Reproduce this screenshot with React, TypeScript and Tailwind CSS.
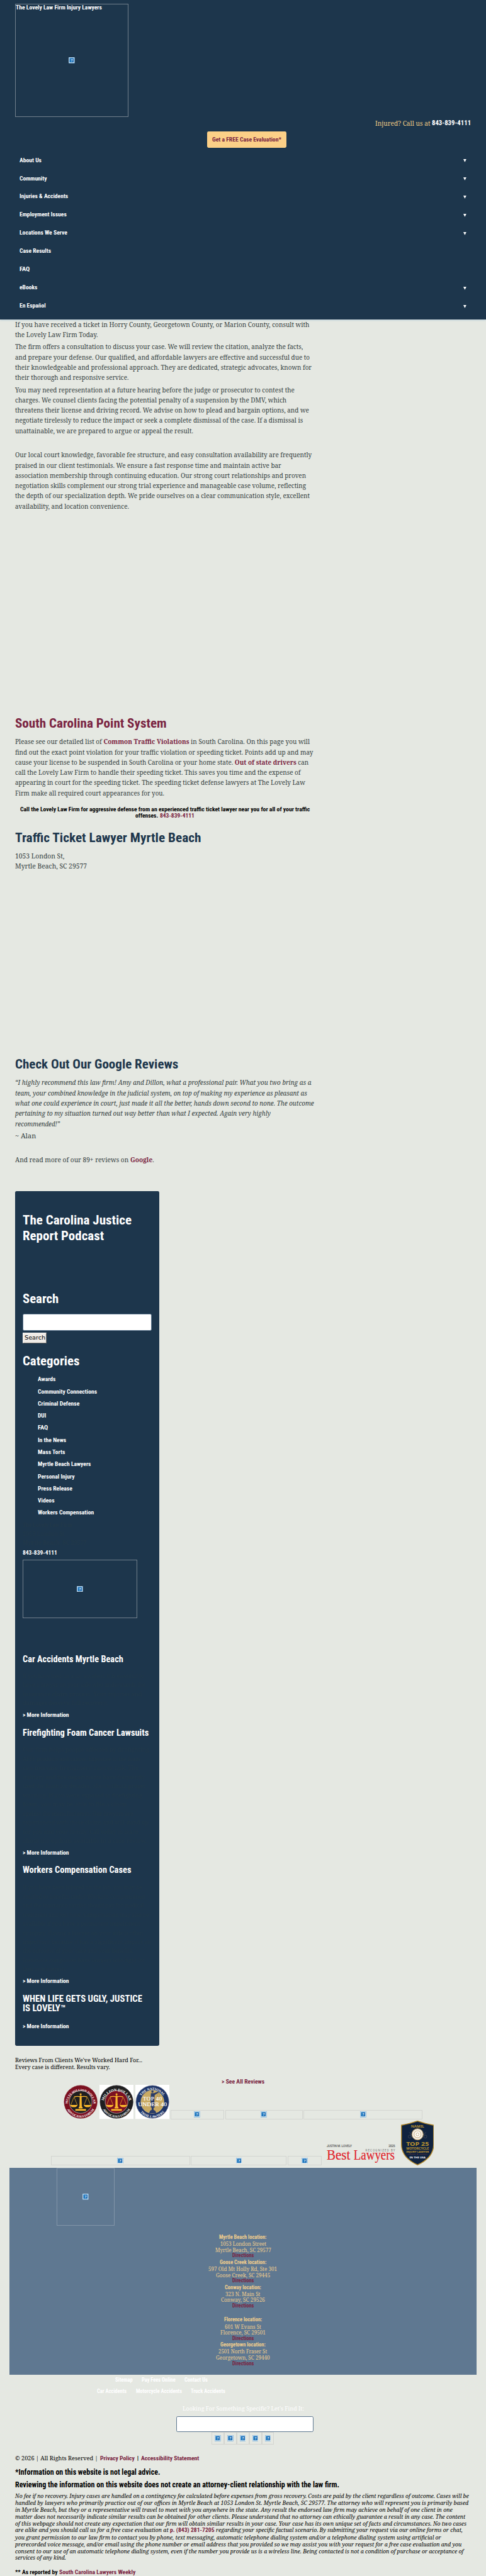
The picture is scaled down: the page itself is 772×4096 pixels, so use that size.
import { useLayoutEffect, useRef, type ReactNode } from "react";

const PAGE_WIDTH = 1280;

/** One line of text, condensed or widened so that it spans `w` pixels. */
function T({ w, className = "", children }: { w: number; className?: string; children: ReactNode }) {
  const ref = useRef<HTMLSpanElement>(null);
  useLayoutEffect(() => {
    const el = ref.current;
    const page = el?.closest("[data-page]");
    if (!el || !page) return;
    el.style.width = "";
    el.style.transform = "";
    const scale = page.getBoundingClientRect().width / PAGE_WIDTH;
    const natural = el.getBoundingClientRect().width / scale;
    el.style.width = `${w}px`;
    el.style.transform = `scaleX(${w / natural})`;
  }, [w]);
  return (
    <span ref={ref} className={`block w-fit origin-left whitespace-pre ${className}`}>
      {children}
    </span>
  );
}

function Missing() {
  return (
    <svg viewBox="0 0 16 16" className="size-4 shrink-0">
      <rect x="0" y="0" width="16" height="16" fill="#5c9fd2" />
      <rect x="0.8" y="0.8" width="14.4" height="14.4" fill="#fff" />
      <rect x="2.2" y="2.2" width="11.6" height="11.6" fill="#1f74bb" />
      <text x="8" y="12" textAnchor="middle" fontSize="11" fill="#fff" fontFamily="Liberation Serif, serif" fontWeight="bold">?</text>
    </svg>
  );
}

function Frame({ className }: { className: string }) {
  return (
    <div className={`flex shrink-0 items-center justify-center border-2 ${className}`}>
      <Missing />
    </div>
  );
}

const nav: [string, number, boolean][] = [
  ["About Us", 58, true],
  ["Community", 72, true],
  ["Injuries & Accidents", 128, true],
  ["Employment Issues", 124, true],
  ["Locations We Serve", 126, true],
  ["Case Results", 83, false],
  ["FAQ", 27, false],
  ["eBooks", 47, true],
  ["En Español", 69, true],
];

const intro: { cls: string; lines: [string, number][] }[] = [
  {
    cls: "",
    lines: [
      ["If you have received a ticket in Horry County, Georgetown County, or Marion County, consult with", 775],
      ["the Lovely Law Firm Today.", 218],
    ],
  },
  {
    cls: "mt-[5px]",
    lines: [
      ["The firm offers a consultation to discuss your case. We will review the citation, analyze the facts,", 758],
      ["and prepare your defense. Our qualified, and affordable lawyers are effective and successful due to", 776],
      ["their knowledgeable and professional approach. They are dedicated, strategic advocates, known for", 781],
      ["their thorough and responsive service.", 299],
    ],
  },
  {
    cls: "mt-[5px]",
    lines: [
      ["You may need representation at a future hearing before the judge or prosecutor to contest the", 736],
      ["charges. We counsel clients facing the potential penalty of a suspension by the DMV, which", 715],
      ["threatens their license and driving record. We advise on how to plead and bargain options, and we", 774],
      ["negotiate tirelessly to reduce the impact or seek a complete dismissal of the case. If a dismissal is", 758],
      ["unattainable, we are prepared to argue or appeal the result.", 469],
    ],
  },
  {
    cls: "mt-[37px]",
    lines: [
      ["Our local court knowledge, favorable fee structure, and easy consultation availability are frequently", 781],
      ["praised in our client testimonials. We ensure a fast response time and maintain active bar", 701],
      ["association membership through continuing education. Our strong court relationships and proven", 766],
      ["negotiation skills complement our strong trial experience and manageable case volume, reflecting", 766],
      ["the depth of our specialization depth. We pride ourselves on a clear communication style, excellent", 776],
      ["availability, and location convenience.", 300],
    ],
  },
];

const review: [string, number][] = [
  ["“I highly recommend this law firm! Amy and Dillon, what a professional pair. What you two bring as a", 780],
  ["team, your combined knowledge in the judicial system, on top of making my experience as pleasant as", 769],
  ["what one could experience in court, just made it all the better, hands down second to none. The outcome", 787],
  ["pertaining to my situation turned out way better than what I expected. Again very highly", 673],
  ["recommended!”", 118],
];

const categories: [string, number][] = [
  ["Awards", 47],
  ["Community Connections", 156],
  ["Criminal Defense", 110],
  ["DUI", 22],
  ["FAQ", 27],
  ["In the News", 75],
  ["Mass Torts", 72],
  ["Myrtle Beach Lawyers", 140],
  ["Personal Injury", 97],
  ["Press Release", 91],
  ["Videos", 44],
  ["Workers Compensation", 148],
];

const carText: [string, number][] = [
  ["If you have been in a car accident, it is essential to", 319],
  ["have a lawyer on your side who understands the", 323],
  ["insurance claim process. Your injuries and", 314],
  ["damages deserve full recovery.", 223],
];

const foamText: [string, number][] = [
  ["Our firm helps people affected by firefighting", 333],
  ["AFFF products and cancer. Exposure to the foam", 309],
  ["can increase firefighters' cancer risk. The", 305],
  ["military and fire departments have frequently", 322],
  ["used the foam for decades, often without proper", 324],
  ["warning. If you were exposed to firefighting", 315],
  ["foam, you may be able to file a claim", 274],
  ["against the manufacturers. Our lawyers are", 291],
  ["experienced with these claims and will stand up", 331],
  ["for you and your family. Call today to learn", 305],
  ["about the options available in a case review.", 327],
];

const workText: [string, number][] = [
  ["If you have been injured on the job, you may be", 314],
  ["entitled to benefits under Workers Compensation", 323],
  ["and the insurance carrier should pay for medical", 319],
  ["treatment and lost time. Compensation may also be", 332],
  ["available if you have a permanent impairment", 309],
  ["or injury. Having a lawyer on your side is often", 317],
  ["important because it has a significant impact on", 338],
  ["the outcome of your case and your benefits.", 291],
  ["Insurance companies have lawyers who fight for", 323],
  ["their own interests.", 115],
];

function Faint({ lines, className }: { lines: [string, number][]; className: string }) {
  return (
    <div className={`font-['Noto_Serif',serif] text-[15px] leading-[24px] font-normal text-[#21384a] ${className}`}>
      {lines.map(([t, w]) => (
        <T key={t} w={w} className="h-[24px]">{t}</T>
      ))}
    </div>
  );
}

function More({ className }: { className: string }) {
  return <T w={122} className={`h-6 text-base leading-6 ${className}`}>{"> More Information"}</T>;
}

type Place = { name: [string, number]; a: [string, number]; b: [string, number]; gap?: boolean };
const places: Place[] = [
  { name: ["Myrtle Beach location:", 125], a: ["1053 London Street", 121], b: ["Myrtle Beach, SC 29577", 147] },
  { name: ["Goose Creek location:", 123], a: ["597 Old Mt Holly Rd, Ste 301", 181], b: ["Goose Creek, SC 29445", 143] },
  { name: ["Conway location:", 96], a: ["323 N. Main St", 92], b: ["Conway, SC 29526", 116], gap: true },
  { name: ["Florence location:", 100], a: ["601 W Evans St", 96], b: ["Florence, SC 29501", 119] },
  { name: ["Georgetown location:", 119], a: ["2501 North Fraser St", 128], b: ["Georgetown, SC 29440", 142] },
];

const legalA: [string, number][] = [
  ["No fee if no recovery. Injury cases are handled on a contingency fee calculated before expenses from gross recovery. Costs are paid by the client regardless of outcome. Cases will be", 1195],
  ["handled by lawyers who primarily practice out of our offices in Myrtle Beach at 1053 London St. Myrtle Beach, SC 29577. The attorney who will represent you is primarily based", 1194],
  ["in Myrtle Beach, but they or a representative will travel to meet with you anywhere in the state. Any result the endorsed law firm may achieve on behalf of one client in one", 1152],
  ["matter does not necessarily indicate similar results can be obtained for other clients. Please understand that no attorney can ethically guarantee a result in any case. The content", 1186],
  ["of this webpage should not create any expectation that our firm will obtain similar results in your case. Your case has its own unique set of facts and circumstances. No two cases", 1189],
];
const legalB: [string, number][] = [
  ["you grant permission to our law firm to contact you by phone, text messaging, automatic telephone dialing system and/or a telephone dialing system using artificial or", 1122],
  ["prerecorded voice message, and/or email using the phone number or email address that you provided so we may assist you with your request for a free case evaluation and you", 1176],
  ["consent to our use of an automatic telephone dialing system, even if the number you provide us is a wireless line. Being contacted is not a condition of purchase or acceptance of", 1181],
  ["services of any kind.", 134],
];

function Scales() {
  return (
    <g fill="#fbb92c" stroke="#fbb92c">
      <path d="M43 29h4l1 30h-6z" strokeWidth="0.6" />
      <circle cx="45" cy="25" r="2.6" stroke="none" />
      <path d="M28 32q8-3 17 0q9-3 17 0" fill="none" strokeWidth="2.4" />
      <path d="M27 33l-8 20M28 33l8 20M62 33l-8 20M63 33l8 20" fill="none" strokeWidth="1.1" />
      <path d="M17 53h20q-2 6-10 6t-10-6zM53 53h20q-2 6-10 6t-10-6z" stroke="none" />
      <path d="M40 58h10v4h-10zM31 64h28v4.500h-28z" stroke="none" />
    </g>
  );
}

function ForumBadge({ id, ring, core, top, size, box }: { id: string; ring: string; core: string; top: string; size: number; box?: boolean }) {
  return (
    <svg viewBox="0 0 90 90" className="size-[90px] shrink-0">
      {box && <rect width="90" height="90" fill="#fff" />}
      <circle cx="45" cy="45" r="43.500" fill={ring} stroke={ring} strokeWidth="1" />
      <circle cx="45" cy="45" r="30" fill={core} stroke="#ddd" strokeWidth="1" />
      <path id={`${id}-top`} d="M10.500 51a34.500 34.500 0 1 1 69 0" fill="none" />
      <path id={`${id}-bottom`} d="M5.500 55a40.500 40.500 0 0 0 79 0" fill="none" />
      <g fill="#fff" fontFamily="Liberation Serif, serif" fontWeight="bold">
        <text fontSize={size} textAnchor="middle"><textPath href={`#${id}-top`} startOffset="50%">{top}</textPath></text>
        <text fontSize="8.500" textAnchor="middle"><textPath href={`#${id}-bottom`} startOffset="50%">ADVOCATES FORUM</textPath></text>
      </g>
      <Scales />
    </svg>
  );
}

function TrialBadge() {
  return (
    <svg viewBox="0 0 90 90" className="size-[90px] shrink-0">
      <rect width="90" height="90" fill="#fff" />
      <circle cx="45" cy="45" r="43.500" fill="#1d3468" stroke="#8d93a5" strokeWidth="1" />
      <circle cx="45" cy="45" r="30.500" fill="#c9aa63" stroke="#d8c48c" strokeWidth="1" />
      <g fill="#2a3c68">
        <circle cx="45" cy="18" r="3" />
        <path d="M41 22h8l11-4 2 2-11 7-1 14 1 19h-10l-1-19z" />
        <path d="M36 75l3-7 4-2v-8h5v8l5 3 2 6z" />
        <path d="M61 19l-4 12h8zM61 19" fill="none" stroke="#8a7a50" strokeWidth="0.8" />
      </g>
      <path id="trial-top" d="M10.500 48a34.500 34.500 0 1 1 69 0" fill="none" />
      <path id="trial-bottom" d="M5.500 55a40.500 40.500 0 0 0 79 0" fill="none" />
      <g fill="#fff" fontFamily="Liberation Serif, serif" fontWeight="bold">
        <text fontSize="9" textAnchor="middle"><textPath href="#trial-top" startOffset="50%">THE  NATIONAL</textPath></text>
        <text fontSize="8.500" textAnchor="middle"><textPath href="#trial-bottom" startOffset="50%">TRIAL  LAWYERS</textPath></text>
        <g fontWeight="normal" stroke="#fff" strokeWidth="0.3">
          <text x="45" y="42" fontSize="15" textAnchor="middle" textLength="50">TOP 40</text>
          <text x="45" y="56.500" fontSize="15" textAnchor="middle" textLength="76" lengthAdjust="spacingAndGlyphs">UNDER 40</text>
        </g>
      </g>
    </svg>
  );
}

function BestLawyers() {
  return (
    <svg viewBox="0 0 182 56" className="h-[56px] w-[182px] shrink-0 overflow-visible">
      <g fontFamily="Roboto, sans-serif" fontWeight="normal" fill="#555">
        <text x="0" y="7.500" fontSize="8" textLength="66" stroke="#555" strokeWidth="0.2">JUSTIN M. LOVELY</text>
        <text x="163" y="7.500" fontSize="8" textLength="17" stroke="#555" strokeWidth="0.2">2025</text>
        <text x="102" y="19.500" fontSize="7.500" textLength="78" fill="#777">RECOGNIZED BY</text>
      </g>
      <g fontFamily="Liberation Serif, serif" fontWeight="normal" fill="#e0222b" stroke="#e0222b" strokeWidth="0.3" fontSize="40">
        <text x="0" y="42" textLength="62" lengthAdjust="spacingAndGlyphs">Best</text>
        <text x="71" y="42" textLength="108" lengthAdjust="spacingAndGlyphs">Lawyers</text>
      </g>
    </svg>
  );
}

function Shield() {
  return (
    <svg viewBox="0 0 87 118" className="h-[118px] w-[87px] shrink-0">
      <path d="M1 12Q24 8 43.500 1Q63 8 86 12V62Q86 97 43.500 116.500Q1 97 1 62Z" fill="#10233f" stroke="#b48a2c" strokeWidth="2.400" />
      <g fontFamily="Noto Sans, sans-serif" textAnchor="middle" fill="#bd9430" fontWeight="bold">
        <text x="43.500" y="18.500" fontSize="10" textLength="35" lengthAdjust="spacingAndGlyphs">NAMIL</text>
        <text x="43.500" y="66" fontSize="14.500" textLength="60" lengthAdjust="spacingAndGlyphs">TOP 25</text>
        <text x="43.500" y="75.500" fontSize="8" textLength="60" lengthAdjust="spacingAndGlyphs">MOTORCYCLE</text>
        <text x="43.500" y="84" fontSize="7" textLength="60" lengthAdjust="spacingAndGlyphs">INJURY LAWYER</text>
        <text x="43.500" y="99" fontSize="7" textLength="42" lengthAdjust="spacingAndGlyphs" fill="#fff">IN THE USA</text>
      </g>
      <path d="M18 88.500h20M49 88.500h20" stroke="#7b3438" strokeWidth="0.800" />
      <circle cx="43.500" cy="88.500" r="1.300" fill="#7b3438" />
      <g fill="none" stroke="#3d4452" strokeWidth="1.600">
        <circle cx="23" cy="42" r="4" />
        <circle cx="64" cy="42" r="4" />
        <path d="M21 31q6 2 6 7M66 31q-6 2-6 7" />
      </g>
      <circle cx="43.500" cy="36" r="15" fill="#f3ece2" stroke="#a98a52" strokeWidth="1.600" />
      <circle cx="43.500" cy="36" r="9" fill="#fff" stroke="#cdb68c" strokeWidth="1.800" />
      <circle cx="43.500" cy="36" r="4" fill="none" stroke="#c1a878" strokeWidth="1.500" />
    </svg>
  );
}

const H2 = "h-10 text-[35px] leading-10";
const BODY = "font-['Noto_Serif',serif] text-lg font-normal leading-[27px] text-[#333d40]";
const LINE = "h-[27px]";
const LINK = "font-bold text-[#7a2441]";

export default function App() {
  return (
    <div className="h-[4096px] w-[772px] overflow-hidden bg-[#e5e8e2]">
      <div data-page className="flex h-[6792px] w-[1280px] flex-col overflow-hidden bg-[#e5e8e2] font-['Roboto_Condensed',Roboto,sans-serif] font-bold text-black [zoom:0.603125]">
        <header className="h-[842px] shrink-0 bg-[#1d364c] px-10 pt-2.5 text-base text-white shadow-[0_1px_5px_#b9cdd8]">
          <div className="relative h-[298px] w-[298px]">
            <Frame className="h-full w-full border-[#72808d]" />
            <div className="absolute left-0.5 top-0 leading-5">
              <T w={227}>The Lovely Law Firm Injury Lawyers</T>
            </div>
          </div>
          <div className="flex h-8 justify-end gap-1 text-lg leading-8">
            <T w={145} className="font-['Noto_Serif',serif] font-normal text-[#f0cb85]">Injured? Call us at</T>
            <T w={103}>843-839-4111</T>
          </div>
          <div className="mt-1.5 flex h-[44px] justify-center pl-5">
            <div className="flex w-[208px] items-center justify-center rounded bg-[#fcd087] text-[#7a2441]">
              <T w={182}>Get a FREE Case Evaluation*</T>
            </div>
          </div>
          <nav className="mt-[9px] px-3 leading-[48px]">
            {nav.map(([label, w, arrow]) => (
              <div key={label} className="flex h-12 items-center justify-between">
                <T w={w}>{label}</T>
                {arrow && (
                  <svg viewBox="0 0 8 8" className="mt-0.5 h-2 w-2"><path d="M0 0h8L4 8z" fill="#fff" /></svg>
                )}
              </div>
            ))}
          </nav>
        </header>

        <main className="h-[2298px] shrink-0 px-10">
          <section className={`h-[1045px] ${BODY}`}>
            {intro.map((p) => (
              <div key={p.lines[0][0]} className={p.cls}>
                {p.lines.map(([t, w]) => (
                  <T key={t} w={w} className={LINE}>{t}</T>
                ))}
              </div>
            ))}
          </section>
          <section className="h-[898px]">
            <T w={399} className={`${H2} text-[#7a2441]`}>South Carolina Point System</T>
            <div className={`mt-[15px] ${BODY}`}>
              <T w={776} className={LINE}>Please see our detailed list of <b className={LINK}>Common Traffic Violations</b> in South Carolina. On this page you will</T>
              <T w={785} className={LINE}>find out the exact point violation for your traffic violation or speeding ticket. Points add up and may</T>
              <T w={773} className={LINE}>cause your license to be suspended in South Carolina or your home state. <b className={LINK}>Out of state drivers</b> can</T>
              <T w={752} className={LINE}>call the Lovely Law Firm to handle their speeding ticket. This saves you time and the expense of</T>
              <T w={764} className={LINE}>appearing in court for the speeding ticket. The speeding ticket defense lawyers at The Lovely Law</T>
              <T w={393} className={LINE}>Firm make all required court appearances for you.</T>
            </div>
            <div className="mt-[21px] flex w-[789px] flex-col items-center text-base leading-[18px]">
              <T w={763} className="h-[18px]">Call the Lovely Law Firm for aggressive defense from an experienced traffic ticket lawyer near you for all of your traffic</T>
              <div className="flex gap-[5px]">
                <T w={60} className="h-[18px]">offenses.</T>
                <T w={91} className="text-[#7a2441]">843-839-4111</T>
              </div>
            </div>
            <T w={490} className={`mt-[27px] ${H2} text-[#1d364c]`}>Traffic Ticket Lawyer Myrtle Beach</T>
            <div className={`mt-[15px] ${BODY}`}>
              <T w={130} className={LINE}>1053 London St,</T>
              <T w={189} className={LINE}>Myrtle Beach, SC 29577</T>
            </div>
          </section>
          <section className="pt-px">
            <T w={430} className={`${H2} text-[#1d364c]`}>Check Out Our Google Reviews</T>
            <div className={`mt-[15px] ${BODY}`}>
              {review.map(([t, w]) => (
                <T key={t} w={w} className="h-[27px] italic">{t}</T>
              ))}
              <T w={55} className="mt-[5px] h-[27px]">~ Alan</T>
              <T w={366} className="mt-[37px] h-[27px]">And read more of our 89+ reviews on <b className={LINK}>Google</b>.</T>
            </div>
          </section>
        </main>

        <aside className="ml-10 h-[2253px] w-[380px] shrink-0 rounded bg-[#1d364c] px-5 pt-[55px] text-white">
          <div className="text-[35px] leading-[42px]">
            <T w={287} className="h-[42px]">The Carolina Justice</T>
            <T w={214} className="h-[42px]">Report Podcast</T>
            <T w={95} className="mt-[123px] h-[42px]">Search</T>
          </div>
          <div className="mt-[20px] h-[45px] rounded border border-[#5f7890] bg-white" />
          <div className="mt-[5px] flex h-[28px] w-[63px] items-center justify-center border-2 border-t-[#f8f7f5] border-l-[#f8f7f5] border-r-[#77736e] border-b-[#77736e] bg-[#efebe7] font-['DejaVu_Sans',sans-serif] text-[15px] font-normal text-black">
            <T w={55}>Search</T>
          </div>
          <T w={150} className="mt-[25px] h-[42px] text-[35px] leading-[42px]">Categories</T>
          <ul className="mt-[11px] text-base leading-8">
            {categories.map(([t, w]) => (
              <li key={t} className="flex h-8 items-center pl-[24px]">
                <span className="mr-[11px] size-[5px] rounded-full bg-[#21384a]" />
                <T w={w} className="h-8">{t}</T>
              </li>
            ))}
          </ul>
          <div className="mt-[5px] font-['Noto_Serif',serif] text-[15px] leading-[23px] text-[#21384a]">
            <T w={130} className="h-[23px]">The Lovely Law Firm</T>
            <T w={110} className="h-[23px] font-normal">1053 London St</T>
            <T w={168} className="h-[23px]">Myrtle Beach, SC 29577</T>
          </div>
          <T w={91} className="mt-[4px] h-6 text-base leading-6">843-839-4111</T>
          <Frame className="mt-[6px] h-[155px] w-[301px] border-[#72808d]" />
          <T w={265} className="mt-[95px] h-[27px] text-2xl leading-[27px]">Car Accidents Myrtle Beach</T>
          <Faint lines={carText} className="mt-[18px]" />
          <More className="mt-[7px]" />
          <T w={332} className="mt-[22px] h-[27px] text-2xl leading-[27px]">Firefighting Foam Cancer Lawsuits</T>
          <Faint lines={foamText} className="mt-[19px]" />
          <More className="mt-[7px]" />
          <T w={286} className="mt-[22px] h-[27px] text-2xl leading-[27px]">Workers Compensation Cases</T>
          <Faint lines={workText} className="mt-[19px]" />
          <More className="mt-[7px]" />
          <div className="mt-[22px] text-2xl leading-[26px]">
            <T w={315} className="h-[26px]">WHEN LIFE GETS UGLY, JUSTICE</T>
            <T w={113} className="h-[26px]">IS LOVELY™</T>
          </div>
          <More className="mt-[22px]" />
        </aside>

        <section className="h-[323px] shrink-0 pt-[30px] text-base leading-[18px]">
          <div className="ml-10 font-['Noto_Serif',serif] font-normal">
            <T w={335} className="h-[18px]">Reviews From Clients We've Worked Hard For...</T>
            <T w={250} className="h-[18px]">Every case is different. Results vary.</T>
          </div>
          <T w={113} className="mx-auto mt-[21px] h-[17px] text-[#7a2441]">{"> See All Reviews"}</T>
          <div className="flex items-end gap-[3px] pl-[168px]">
            <div className="flex gap-1">
              <ForumBadge id="multi" ring="#7c1020" core="#1f1e20" top="MULTI-MILLION DOLLAR" size={8.4} />
              <ForumBadge id="million" ring="#1f1e20" core="#7c1020" top="MILLION DOLLAR" size={10} box />
              <TrialBadge />
            </div>
            <Frame className="h-[25px] w-[141px] border-[#d3d5d1]" />
            <Frame className="h-[25px] w-[204px] border-[#d3d5d1]" />
            <Frame className="h-[25px] w-[313px] border-[#d3d5d1]" />
          </div>
          <div className="mt-[4px] flex items-end gap-[3px] pl-[134px]">
            <Frame className="h-[25px] w-[366px] border-[#d3d5d1]" />
            <Frame className="h-[25px] w-[252px] border-[#d3d5d1]" />
            <Frame className="h-[25px] w-[90px] border-[#d3d5d1]" />
            <div className="ml-[10px] flex items-end gap-[13px]">
              <BestLawyers />
              <Shield />
            </div>
          </div>
        </section>

        <footer className="mx-[25px] h-[545px] shrink-0 bg-[#5f7891]">
          <div className="h-[175px] pl-[124px]">
            <Frame className="h-[152px] w-[152px] border-[#8295a8]" />
          </div>
          <div className="flex flex-col items-center text-sm leading-4">
            {places.map((p) => (
              <div key={p.name[0]} className={`flex h-[66px] flex-col items-center ${p.gap ? "mb-5" : ""}`}>
                <T w={p.name[1]} className="h-[17px] text-[#f2ce8d]">{p.name[0]}</T>
                <T w={p.a[1]} className="h-4 font-['Noto_Serif',serif] font-normal text-[#f2ce8d]">{p.a[0]}</T>
                <T w={p.b[1]} className="h-4 font-['Noto_Serif',serif] font-normal text-[#f2ce8d]">{p.b[0]}</T>
                <T w={57} className="h-4 text-[#7a2441]">Directions</T>
              </div>
            ))}
          </div>
        </footer>

        <section className="h-[531px] shrink-0 text-base text-black">
          <div className="h-[77px] w-[850px] text-sm leading-7 text-white">
            <div className="flex h-[29px] justify-center gap-6">
              <T w={46}>Sitemap</T>
              <T w={89}>Pay Fees Online</T>
              <T w={61}>Contact Us</T>
            </div>
            <div className="flex h-[29px] justify-center gap-6">
              <T w={78}>Car Accidents</T>
              <T w={121}>Motorcycle Accidents</T>
              <T w={91}>Truck Accidents</T>
            </div>
          </div>
          <T w={320} className="mx-auto h-6 font-['Noto_Serif',serif] font-normal leading-6 text-white">Looking For Something Specific? Let's Find It:</T>
          <div className="ml-[465px] mt-[8px] h-[42px] w-[360px] rounded border border-[#5f7891] bg-white" />
          <div className="ml-[557px] flex">
            {[0, 1, 2, 3, 4].map((i) => (
              <Frame key={i} className="h-[33px] w-[33px] border-[#d3d5d1]" />
            ))}
          </div>
          <div className="px-10">
            <div className="mt-[24px] flex h-6 gap-[5px] leading-6">
              <T w={218} className="font-['Noto_Serif',serif] font-normal">© 2026 | All Rights Reserved |</T>
              <T w={91} className="text-[#7a2441]">Privacy Policy</T>
              <span className="w-2 text-center">|</span>
              <T w={153} className="text-[#7a2441]">Accessibility Statement</T>
            </div>
            <T w={382} className="mt-[12px] h-7 text-xl leading-7">*Information on this website is not legal advice.</T>
            <T w={854} className="mt-[5px] h-7 text-xl leading-7">Reviewing the information on this website does not create an attorney-client relationship with the law firm.</T>
            <div className="mt-[7px] font-['Noto_Serif',serif] font-normal italic leading-[18px]">
              {legalA.map(([t, w]) => (
                <T key={t} w={w} className="h-[18px]">{t}</T>
              ))}
              <div className="flex h-[19px] gap-1">
                <T w={404}>are alike and you should call us for a free case evaluation at</T>
                <T w={117} className="font-['Roboto_Condensed',Roboto,sans-serif] font-bold not-italic text-[#7a2441]">p. (843) 281-7205</T>
                <T w={650}>regarding your specific factual scenario. By submitting your request via our online forms or chat,</T>
              </div>
              {legalB.map(([t, w]) => (
                <T key={t} w={w} className="h-[18px]">{t}</T>
              ))}
            </div>
            <div className="mt-[19px] flex gap-1 leading-[18px]">
              <T w={112}>** As reported by</T>
              <T w={201} className="text-[#7a2441]">South Carolina Lawyers Weekly</T>
            </div>
          </div>
        </section>
      </div>
    </div>
  );
}
